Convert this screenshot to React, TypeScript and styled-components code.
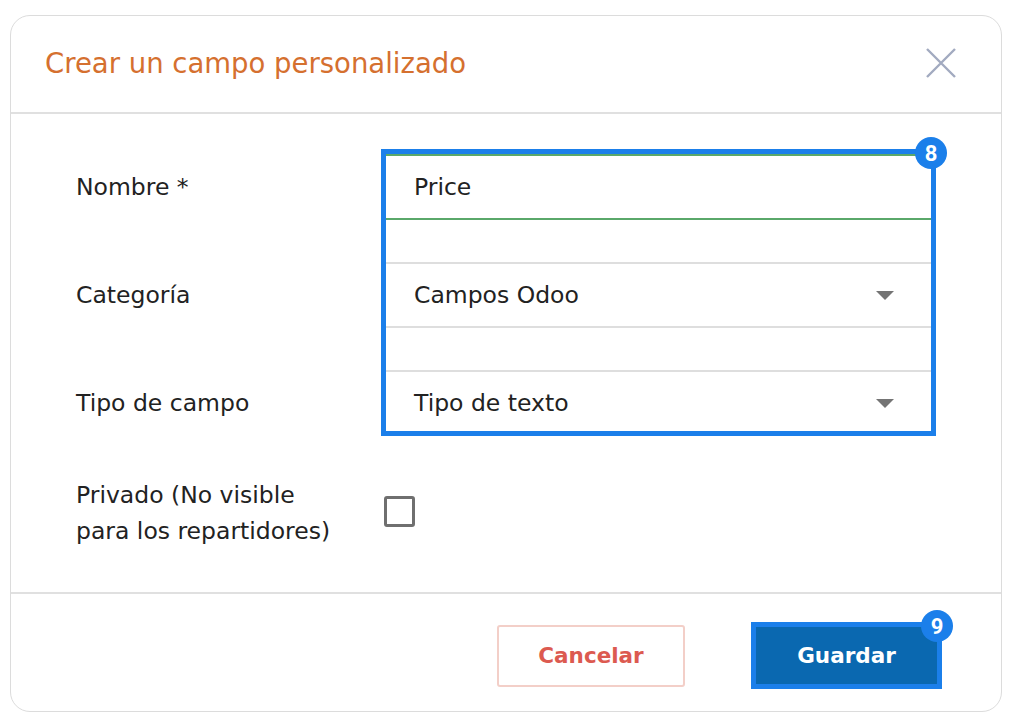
import React from "react";
import styled, { createGlobalStyle } from "styled-components";

const GlobalStyle = createGlobalStyle`
  html, body {
    margin: 0;
    padding: 0;
    background: #ffffff;
  }
  body {
    font-family: "DejaVu Sans", "Open Sans", sans-serif;
    color: #222222;
  }
`;

const Page = styled.div`
  padding: 15px 9px 15px 10px;
`;

const Card = styled.div`
  width: 992px;
  height: 697px;
  box-sizing: border-box;
  border: 1px solid #dcdcdc;
  border-radius: 20px;
  display: flex;
  flex-direction: column;
  background: #fff;
`;

const Header = styled.div`
  height: 98px;
  box-sizing: border-box;
  display: flex;
  align-items: center;
  justify-content: space-between;
  padding: 0 44px 2px 34px;
  border-bottom: 2px solid #e0e0e0;
`;

const Title = styled.h2`
  margin: 0;
  font-size: 27.5px;
  font-weight: 400;
  color: #d5702f;
`;

const CloseButton = styled.button`
  width: 32px;
  height: 32px;
  padding: 0;
  border: none;
  background: transparent;
  display: flex;
  align-items: center;
  justify-content: center;
  cursor: pointer;
`;

const Body = styled.div`
  flex: 1;
  display: flex;
  flex-direction: column;
  gap: 41px;
  padding: 35px 66px 0 65px;
`;

const FieldsRow = styled.div`
  display: grid;
  grid-template-columns: 305px 555px;
`;

const LabelStack = styled.div`
  display: flex;
  flex-direction: column;
  padding-top: 5px;
  gap: 42px;
`;

const Label = styled.div<{ $height?: number }>`
  height: ${(p) => p.$height ?? 66}px;
  display: flex;
  align-items: center;
  font-size: 23.5px;
  line-height: 36px;
  white-space: nowrap;
`;

const Highlight = styled.div`
  position: relative;
  border: 5px solid #1b7fea;
`;

const Badge = styled.span<{ $top: number; $right: number }>`
  position: absolute;
  top: ${(p) => p.$top}px;
  right: ${(p) => p.$right}px;
  width: 32px;
  height: 32px;
  border-radius: 50%;
  background: #1b7fea;
  color: #fff;
  font-family: "Roboto", "Liberation Sans", sans-serif;
  font-weight: 700;
  font-size: 22px;
  display: flex;
  align-items: center;
  justify-content: center;
`;

const FieldStack = styled.div`
  display: flex;
  flex-direction: column;
  gap: 42px;
  height: 274px;
  overflow: hidden;
`;

const Field = styled.div<{ $accent?: boolean }>`
  height: 66px;
  flex-shrink: 0;
  box-sizing: border-box;
  display: flex;
  align-items: center;
  justify-content: space-between;
  padding: 0 37px 0 28px;
  border-top: 2px solid ${(p) => (p.$accent ? "#5aa86a" : "#dedede")};
  border-bottom: 2px solid ${(p) => (p.$accent ? "#5aa86a" : "#dedede")};
  font-size: 23.5px;
  color: #222;
`;

const Caret = styled.span`
  width: 0;
  height: 0;
  border-left: 9px solid transparent;
  border-right: 9px solid transparent;
  border-top: 9px solid #747474;
`;

const CheckRow = styled.div`
  display: grid;
  grid-template-columns: 308px auto;
  align-items: center;
`;

const Checkbox = styled.span`
  width: 31px;
  height: 31px;
  box-sizing: border-box;
  border: 3px solid #6f6f6f;
  border-radius: 3px;
  margin-bottom: 4px;
`;

const Footer = styled.div`
  height: 119px;
  box-sizing: border-box;
  border-top: 2px solid #e0e0e0;
  display: flex;
  align-items: center;
  justify-content: flex-end;
  gap: 66px;
  padding: 6px 59px 0 0;
`;

const Button = styled.button<{ $primary?: boolean }>`
  position: relative;
  box-sizing: border-box;
  font-family: "DejaVu Sans", "Open Sans", sans-serif;
  font-weight: 700;
  font-size: 21.5px;
  cursor: pointer;
  ${(p) =>
    p.$primary
      ? `
    width: 191px;
    height: 67px;
    background: #0a68b0;
    color: #ffffff;
    border: 5px solid #1b7fea;
    border-radius: 0;
  `
      : `
    width: 188px;
    height: 62px;
    background: #ffffff;
    color: #dc5a50;
    border: 2px solid #f3cfc8;
    border-radius: 3px;
  `}
`;

const CloseIcon = () => (
  <svg width="32" height="32" viewBox="0 0 32 32">
    <path d="M2 2 L30 30 M30 2 L2 30" stroke="#a2aac0" strokeWidth="2.4" fill="none" />
  </svg>
);

const App = (): JSX.Element => {
  return (
    <Page>
      <GlobalStyle />
      <Card>
        <Header>
          <Title>Crear un campo personalizado</Title>
          <CloseButton aria-label="Cerrar">
            <CloseIcon />
          </CloseButton>
        </Header>
        <Body>
          <FieldsRow>
            <LabelStack>
              <Label>Nombre *</Label>
              <Label>Categoría</Label>
              <Label>Tipo de campo</Label>
            </LabelStack>
            <Highlight>
              <FieldStack>
                <Field $accent>Price</Field>
                <Field>
                  Campos Odoo
                  <Caret />
                </Field>
                <Field>
                  Tipo de texto
                  <Caret />
                </Field>
              </FieldStack>
              <Badge $top={-17} $right={-16}>8</Badge>
            </Highlight>
          </FieldsRow>
          <CheckRow>
            <Label $height={72}>
              Privado (No visible
              <br />
              para los repartidores)
            </Label>
            <Checkbox />
          </CheckRow>
        </Body>
        <Footer>
          <Button>Cancelar</Button>
          <Button $primary>
            Guardar
            <Badge $top={-17} $right={-16}>9</Badge>
          </Button>
        </Footer>
      </Card>
    </Page>
  );
};

export default App;
